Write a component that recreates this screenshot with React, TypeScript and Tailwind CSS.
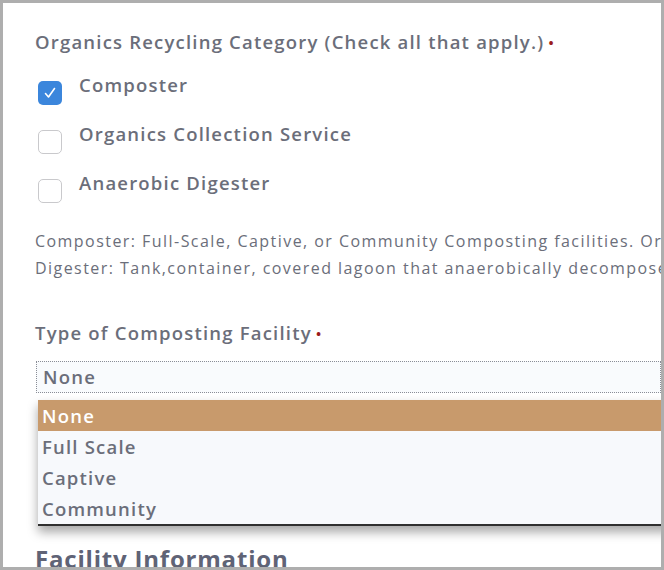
import React from 'react'

const font = { fontFamily: '"Open Sans", "Liberation Sans", sans-serif' }

function Checkbox({ checked }: { checked?: boolean }) {
  if (checked) {
    return (
      <div className="w-[24px] h-[24px] rounded-[5px] bg-[#3b86dc] flex items-center justify-center shrink-0">
        <svg width="14" height="14" viewBox="0 0 14 14" fill="none">
          <path d="M2.5 7.5 L5.5 11 L11.5 2.5" stroke="white" strokeWidth="1.6" strokeLinecap="round" strokeLinejoin="round" />
        </svg>
      </div>
    )
  }
  return <div className="w-[24px] h-[24px] rounded-[5px] border-[1.5px] border-[#c9c9cc] bg-white shrink-0" />
}

const options = [
  { label: 'Composter', checked: true },
  { label: 'Organics Collection Service', checked: false },
  { label: 'Anaerobic Digester', checked: false },
]

const choices = ['None', 'Full Scale', 'Captive', 'Community']

export default function App() {
  return (
    <div
      className="relative w-[664px] h-[570px] overflow-hidden bg-white border-[3px] border-[#aeaeae] text-[#6b6e7a]"
      style={font}
    >
      <div className="pl-[32px] pt-[27px] whitespace-nowrap">
        {/* Category checkboxes */}
        <div className="text-[18.5px] leading-[24px] font-semibold tracking-[1.2px]">
          Organics Recycling Category (Check all that apply.)
          <span className="text-[#9b1c1c] text-[15px] align-top ml-[4px]">•</span>
        </div>

        <div className="mt-[20px] flex flex-col gap-[18px] pl-[3px]">
          {options.map((o) => (
            <div key={o.label} className="flex items-start gap-[17px]">
              <div className="pt-[7px]">
                <Checkbox checked={o.checked} />
              </div>
              <span className="text-[18.5px] leading-[22px] font-semibold tracking-[1.2px]">{o.label}</span>
            </div>
          ))}
        </div>

        <div className="mt-[25px] text-[16px] leading-[27px] font-medium tracking-[1.45px]">
          <div>Composter: Full-Scale, Captive, or Community Composting facilities. Organics Collection Service: Hauling</div>
          <div>Digester: Tank,container, covered lagoon that anaerobically decomposes organic waste.</div>
        </div>

        {/* Facility type select */}
        <div className="mt-[39px] text-[18.5px] leading-[24px] font-semibold tracking-[1.2px]">
          Type of Composting Facility
          <span className="text-[#9b1c1c] text-[15px] align-top ml-[4px]">•</span>
        </div>

        <div className="mt-[16px] ml-[1px] h-[32px] border border-dotted border-[#8a8d96] bg-[#f9fbfd] flex items-center pl-[6px] text-[18.5px] font-semibold tracking-[1.2px]">
          None
        </div>

        <div className="mt-[151px] text-[24px] leading-[30px] font-bold tracking-[0.8px] text-[#5f6376]">
          Facility Information
        </div>
      </div>

      {/* Open dropdown list */}
      <div className="absolute left-[35px] top-[397px] w-[640px] bg-[#f7f9fc] border-b-[2px] border-[#2f2f2f] shadow-[0_6px_10px_rgba(0,0,0,0.35)]">
        {choices.map((c, i) => (
          <div
            key={c}
            className={
              i === 0
                ? 'h-[31px] flex items-center pl-[4px] text-[18.5px] font-semibold tracking-[1.2px] bg-[#c89a6c] text-white'
                : 'h-[31px] flex items-center pl-[4px] text-[18.5px] font-semibold tracking-[1.2px]'
            }
          >
            {c}
          </div>
        ))}
      </div>
    </div>
  )
}
